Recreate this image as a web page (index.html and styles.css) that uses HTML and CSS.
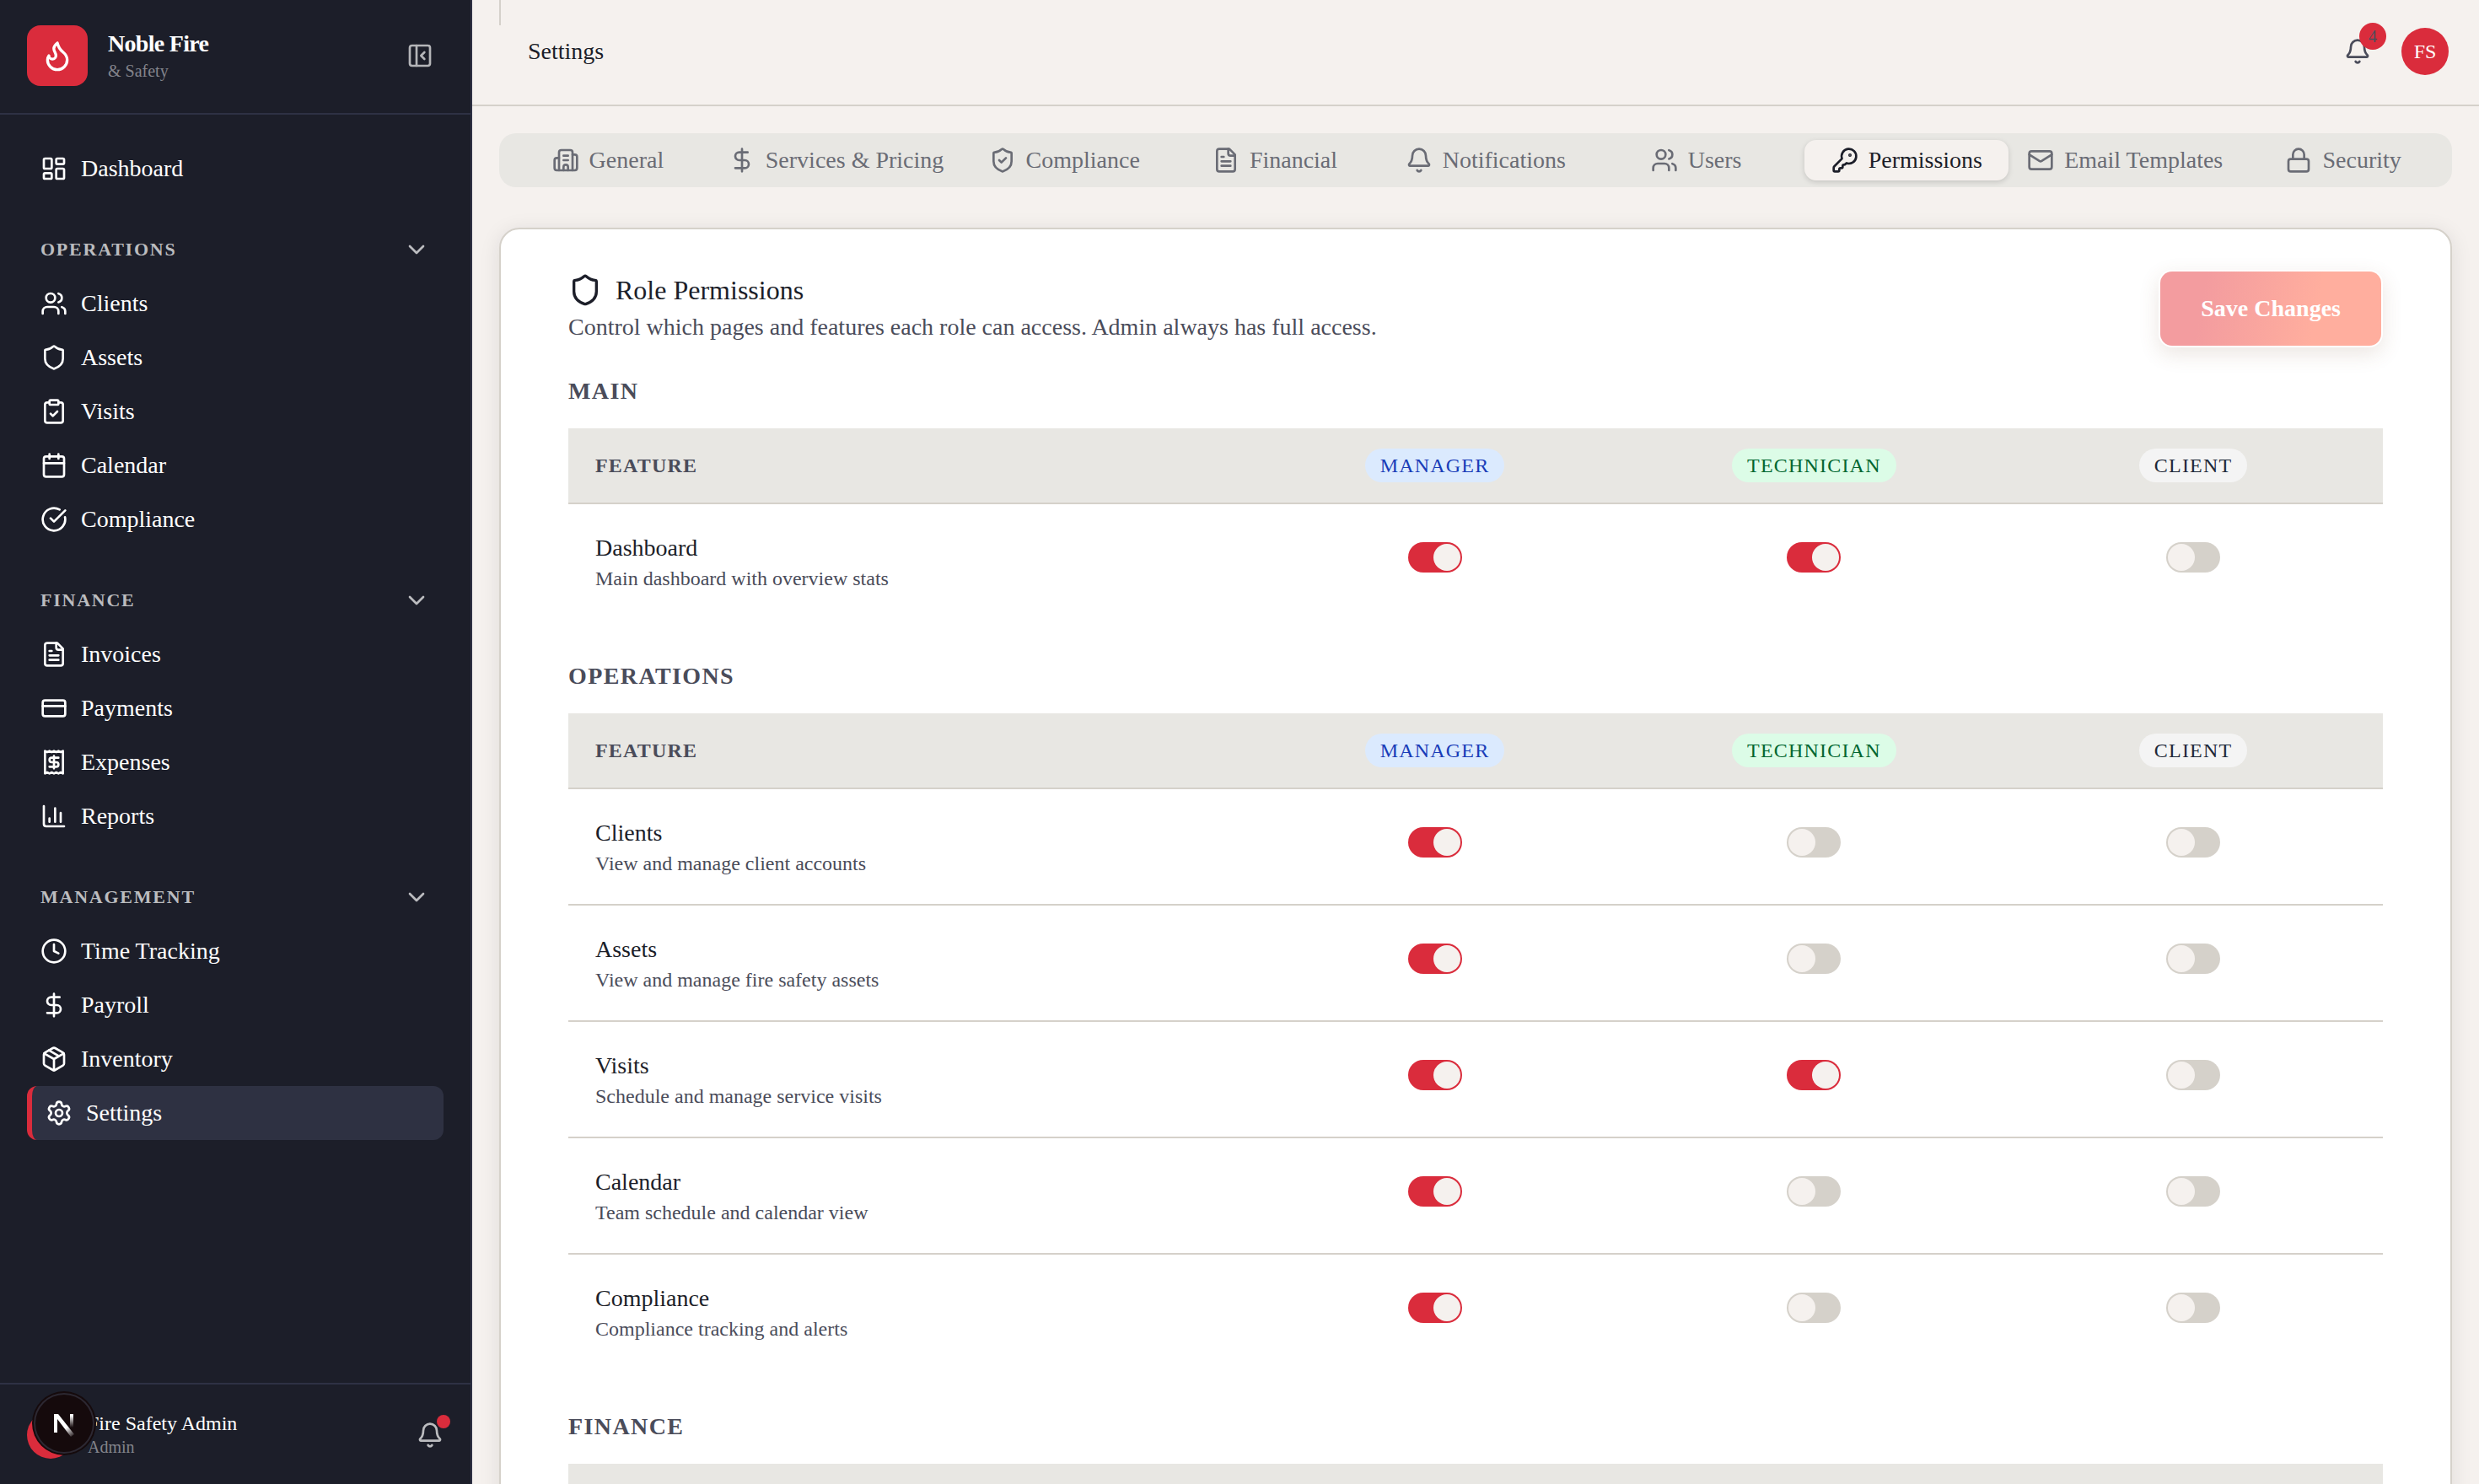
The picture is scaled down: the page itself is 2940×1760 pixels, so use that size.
FILE: index.html
```html
<!DOCTYPE html>
<html lang="en">
<head>
  <meta charset="UTF-8">
  <meta name="viewport" content="width=device-width, initial-scale=1.0">
  <title>Settings - Noble Fire &amp; Safety</title>
  <link rel="stylesheet" href="styles.css">
</head>
<body>
  <!-- icon set -->
  <svg class="sprite" aria-hidden="true">
    <symbol id="i-flame" viewBox="0 0 24 24"><path d="M12 3q1 4 4 6.5t3 5.5a1 1 0 0 1-14 0 5 5 0 0 1 1-3 1 1 0 0 0 5 0c0-2-1.5-3-1.5-5q0-2 2.5-4"/></symbol>
    <symbol id="i-panel" viewBox="0 0 24 24"><rect x="3" y="3" width="18" height="18" rx="2"/><path d="M9 3v18M16 15l-3-3 3-3"/></symbol>
    <symbol id="i-chevron" viewBox="0 0 24 24"><path d="m6 9 6 6 6-6"/></symbol>
    <symbol id="i-dashboard" viewBox="0 0 24 24"><rect x="3" y="3" width="7" height="9" rx="1"/><rect x="14" y="3" width="7" height="5" rx="1"/><rect x="14" y="12" width="7" height="9" rx="1"/><rect x="3" y="16" width="7" height="5" rx="1"/></symbol>
    <symbol id="i-users" viewBox="0 0 24 24"><path d="M16 21v-2a4 4 0 0 0-4-4H6a4 4 0 0 0-4 4v2"/><circle cx="9" cy="7" r="4"/><path d="M22 21v-2a4 4 0 0 0-3-3.87M16 3.13a4 4 0 0 1 0 7.75"/></symbol>
    <symbol id="i-shield" viewBox="0 0 24 24"><path d="M20 13c0 5-3.5 7.5-7.66 8.95a1 1 0 0 1-.67-.01C7.5 20.5 4 18 4 13V6a1 1 0 0 1 1-1c2 0 4.5-1.2 6.24-2.72a1.17 1.17 0 0 1 1.52 0C14.51 3.81 17 5 19 5a1 1 0 0 1 1 1z"/></symbol>
    <symbol id="i-shield-check" viewBox="0 0 24 24"><path d="M20 13c0 5-3.5 7.5-7.66 8.95a1 1 0 0 1-.67-.01C7.5 20.5 4 18 4 13V6a1 1 0 0 1 1-1c2 0 4.5-1.2 6.24-2.72a1.17 1.17 0 0 1 1.52 0C14.51 3.81 17 5 19 5a1 1 0 0 1 1 1z"/><path d="m9 12 2 2 4-4"/></symbol>
    <symbol id="i-clipboard" viewBox="0 0 24 24"><rect x="8" y="2" width="8" height="4" rx="1"/><path d="M16 4h2a2 2 0 0 1 2 2v14a2 2 0 0 1-2 2H6a2 2 0 0 1-2-2V6a2 2 0 0 1 2-2h2M9 14l2 2 4-4"/></symbol>
    <symbol id="i-calendar" viewBox="0 0 24 24"><path d="M8 2v4M16 2v4M3 10h18"/><rect x="3" y="4" width="18" height="18" rx="2"/></symbol>
    <symbol id="i-check" viewBox="0 0 24 24"><path d="M21.801 10A10 10 0 1 1 17 3.335M9 11l3 3L22 4"/></symbol>
    <symbol id="i-file" viewBox="0 0 24 24"><path d="M15 2H6a2 2 0 0 0-2 2v16a2 2 0 0 0 2 2h12a2 2 0 0 0 2-2V7Z"/><path d="M14 2v4a2 2 0 0 0 2 2h4M10 9H8M16 13H8M16 17H8"/></symbol>
    <symbol id="i-card" viewBox="0 0 24 24"><rect x="2" y="5" width="20" height="14" rx="2"/><path d="M2 10h20"/></symbol>
    <symbol id="i-receipt" viewBox="0 0 24 24"><path d="M4 2v20l2-1 2 1 2-1 2 1 2-1 2 1 2-1 2 1V2l-2 1-2-1-2 1-2-1-2 1-2-1-2 1Z"/><path d="M16 8h-6a2 2 0 1 0 0 4h4a2 2 0 1 1 0 4H8M12 17.5v-11"/></symbol>
    <symbol id="i-chart" viewBox="0 0 24 24"><path d="M3 3v16a2 2 0 0 0 2 2h16M18 17V9M13 17V5M8 17v-3"/></symbol>
    <symbol id="i-clock" viewBox="0 0 24 24"><circle cx="12" cy="12" r="10"/><path d="M12 6v6l4 2"/></symbol>
    <symbol id="i-dollar" viewBox="0 0 24 24"><path d="M12 2v20M17 5H9.5a3.5 3.5 0 0 0 0 7h5a3.5 3.5 0 0 1 0 7H6"/></symbol>
    <symbol id="i-package" viewBox="0 0 24 24"><path d="M11 21.73a2 2 0 0 0 2 0l7-4A2 2 0 0 0 21 16V8a2 2 0 0 0-1-1.73l-7-4a2 2 0 0 0-2 0l-7 4A2 2 0 0 0 3 8v8a2 2 0 0 0 1 1.73z"/><path d="M12 22V12M3.29 7 12 12l8.71-5M7.5 4.27l9 5.15"/></symbol>
    <symbol id="i-settings" viewBox="0 0 24 24"><path d="M9.671 4.136a2.34 2.34 0 0 1 4.659 0 2.34 2.34 0 0 0 3.319 1.915 2.34 2.34 0 0 1 2.33 4.033 2.34 2.34 0 0 0 0 3.831 2.34 2.34 0 0 1-2.33 4.033 2.34 2.34 0 0 0-3.319 1.915 2.34 2.34 0 0 1-4.659 0 2.34 2.34 0 0 0-3.32-1.915 2.34 2.34 0 0 1-2.33-4.033 2.34 2.34 0 0 0 0-3.831A2.34 2.34 0 0 1 6.35 6.051a2.34 2.34 0 0 0 3.319-1.915"/><circle cx="12" cy="12" r="3"/></symbol>
    <symbol id="i-bell" viewBox="0 0 24 24"><path d="M10.268 21a2 2 0 0 0 3.464 0M3.262 15.326A1 1 0 0 0 4 17h16a1 1 0 0 0 .74-1.673C19.41 13.956 18 12.499 18 8A6 6 0 0 0 6 8c0 4.499-1.411 5.956-2.738 7.326"/></symbol>
    <symbol id="i-building" viewBox="0 0 24 24"><path d="M10 12h4M10 8h4M14 21v-3a2 2 0 0 0-4 0v3"/><path d="M6 10H4a2 2 0 0 0-2 2v7a2 2 0 0 0 2 2h16a2 2 0 0 0 2-2V9a2 2 0 0 0-2-2h-2"/><path d="M6 21V5a2 2 0 0 1 2-2h8a2 2 0 0 1 2 2v16"/></symbol>
    <symbol id="i-key" viewBox="0 0 24 24"><path d="M2.586 17.414A2 2 0 0 0 2 18.828V21a1 1 0 0 0 1 1h3a1 1 0 0 0 1-1v-1a1 1 0 0 1 1-1h1a1 1 0 0 0 1-1v-1a1 1 0 0 1 1-1h.172a2 2 0 0 0 1.414-.586l.814-.814a6.5 6.5 0 1 0-4-4z"/><circle cx="16.5" cy="7.5" r=".5" fill="currentColor"/></symbol>
    <symbol id="i-mail" viewBox="0 0 24 24"><path d="m22 7-8.991 5.727a2 2 0 0 1-2.009 0L2 7"/><rect x="2" y="4" width="20" height="16" rx="2"/></symbol>
    <symbol id="i-lock" viewBox="0 0 24 24"><rect x="3" y="11" width="18" height="11" rx="2"/><path d="M7 11V7a5 5 0 0 1 10 0v4"/></symbol>
  </svg>

  <aside class="sidebar">
    <div class="brand">
      <div class="brand-logo"><svg class="icon icon-lg"><use href="#i-flame"/></svg></div>
      <div class="brand-text">
        <strong class="brand-name">Noble Fire</strong>
        <span class="small-text">&amp; Safety</span>
      </div>
      <button class="collapse" aria-label="Collapse sidebar"><svg class="icon"><use href="#i-panel"/></svg></button>
    </div>

    <nav class="nav">
      <div class="nav-group">
        <a class="nav-link" href="#"><svg class="icon"><use href="#i-dashboard"/></svg>Dashboard</a>
      </div>
      <div class="nav-group">
        <button class="nav-heading">Operations<svg class="icon"><use href="#i-chevron"/></svg></button>
        <a class="nav-link" href="#"><svg class="icon"><use href="#i-users"/></svg>Clients</a>
        <a class="nav-link" href="#"><svg class="icon"><use href="#i-shield"/></svg>Assets</a>
        <a class="nav-link" href="#"><svg class="icon"><use href="#i-clipboard"/></svg>Visits</a>
        <a class="nav-link" href="#"><svg class="icon"><use href="#i-calendar"/></svg>Calendar</a>
        <a class="nav-link" href="#"><svg class="icon"><use href="#i-check"/></svg>Compliance</a>
      </div>
      <div class="nav-group">
        <button class="nav-heading">Finance<svg class="icon"><use href="#i-chevron"/></svg></button>
        <a class="nav-link" href="#"><svg class="icon"><use href="#i-file"/></svg>Invoices</a>
        <a class="nav-link" href="#"><svg class="icon"><use href="#i-card"/></svg>Payments</a>
        <a class="nav-link" href="#"><svg class="icon"><use href="#i-receipt"/></svg>Expenses</a>
        <a class="nav-link" href="#"><svg class="icon"><use href="#i-chart"/></svg>Reports</a>
      </div>
      <div class="nav-group">
        <button class="nav-heading">Management<svg class="icon"><use href="#i-chevron"/></svg></button>
        <a class="nav-link" href="#"><svg class="icon"><use href="#i-clock"/></svg>Time Tracking</a>
        <a class="nav-link" href="#"><svg class="icon"><use href="#i-dollar"/></svg>Payroll</a>
        <a class="nav-link" href="#"><svg class="icon"><use href="#i-package"/></svg>Inventory</a>
        <a class="nav-link active" href="#"><svg class="icon"><use href="#i-settings"/></svg>Settings</a>
      </div>
    </nav>

    <div class="user">
      <div class="avatar"></div>
      <div class="user-text">
        <span class="user-name">Fire Safety Admin</span>
        <span class="small-text">Admin</span>
      </div>
      <button class="bell-button" aria-label="Notifications"><svg class="icon"><use href="#i-bell"/></svg><span class="dot"></span></button>
    </div>
  </aside>

  <main class="main">
    <header class="topbar">
      <div class="separator"></div>
      <h1 class="page-title">Settings</h1>
      <button class="bell-button" aria-label="4 notifications"><svg class="icon"><use href="#i-bell"/></svg><span class="count">4</span></button>
      <button class="avatar">FS</button>
    </header>

    <div class="content">
      <div class="tabs" role="tablist">
        <button class="tab" role="tab"><svg class="icon"><use href="#i-building"/></svg>General</button>
        <button class="tab" role="tab"><svg class="icon"><use href="#i-dollar"/></svg>Services &amp; Pricing</button>
        <button class="tab" role="tab"><svg class="icon"><use href="#i-shield-check"/></svg>Compliance</button>
        <button class="tab" role="tab"><svg class="icon"><use href="#i-file"/></svg>Financial</button>
        <button class="tab" role="tab"><svg class="icon"><use href="#i-bell"/></svg>Notifications</button>
        <button class="tab" role="tab"><svg class="icon"><use href="#i-users"/></svg>Users</button>
        <button class="tab active" role="tab" aria-selected="true"><svg class="icon"><use href="#i-key"/></svg>Permissions</button>
        <button class="tab" role="tab"><svg class="icon"><use href="#i-mail"/></svg>Email Templates</button>
        <button class="tab" role="tab"><svg class="icon"><use href="#i-lock"/></svg>Security</button>
      </div>

      <section class="card">
        <div class="card-header">
          <div>
            <h2 class="card-title"><svg class="icon icon-lg"><use href="#i-shield"/></svg>Role Permissions</h2>
            <p class="card-description">Control which pages and features each role can access. Admin always has full access.</p>
          </div>
          <button class="save" disabled>Save Changes</button>
        </div>

        <section class="group">
          <h3 class="group-title">Main</h3>
          <table class="permissions">
            <thead>
              <tr>
                <th scope="col">Feature</th>
                <th scope="col" class="role"><span class="badge manager">Manager</span></th>
                <th scope="col" class="role"><span class="badge technician">Technician</span></th>
                <th scope="col" class="role"><span class="badge client">Client</span></th>
              </tr>
            </thead>
            <tbody>
              <tr>
                <td><div class="feature">Dashboard</div><div class="feature-text">Main dashboard with overview stats</div></td>
                <td class="role"><input type="checkbox" class="switch" aria-label="Dashboard, manager" checked></td>
                <td class="role"><input type="checkbox" class="switch" aria-label="Dashboard, technician" checked></td>
                <td class="role"><input type="checkbox" class="switch" aria-label="Dashboard, client"></td>
              </tr>
            </tbody>
          </table>
        </section>

        <section class="group">
          <h3 class="group-title">Operations</h3>
          <table class="permissions">
            <thead>
              <tr>
                <th scope="col">Feature</th>
                <th scope="col" class="role"><span class="badge manager">Manager</span></th>
                <th scope="col" class="role"><span class="badge technician">Technician</span></th>
                <th scope="col" class="role"><span class="badge client">Client</span></th>
              </tr>
            </thead>
            <tbody>
              <tr>
                <td><div class="feature">Clients</div><div class="feature-text">View and manage client accounts</div></td>
                <td class="role"><input type="checkbox" class="switch" aria-label="Clients, manager" checked></td>
                <td class="role"><input type="checkbox" class="switch" aria-label="Clients, technician"></td>
                <td class="role"><input type="checkbox" class="switch" aria-label="Clients, client"></td>
              </tr>
              <tr>
                <td><div class="feature">Assets</div><div class="feature-text">View and manage fire safety assets</div></td>
                <td class="role"><input type="checkbox" class="switch" aria-label="Assets, manager" checked></td>
                <td class="role"><input type="checkbox" class="switch" aria-label="Assets, technician"></td>
                <td class="role"><input type="checkbox" class="switch" aria-label="Assets, client"></td>
              </tr>
              <tr>
                <td><div class="feature">Visits</div><div class="feature-text">Schedule and manage service visits</div></td>
                <td class="role"><input type="checkbox" class="switch" aria-label="Visits, manager" checked></td>
                <td class="role"><input type="checkbox" class="switch" aria-label="Visits, technician" checked></td>
                <td class="role"><input type="checkbox" class="switch" aria-label="Visits, client"></td>
              </tr>
              <tr>
                <td><div class="feature">Calendar</div><div class="feature-text">Team schedule and calendar view</div></td>
                <td class="role"><input type="checkbox" class="switch" aria-label="Calendar, manager" checked></td>
                <td class="role"><input type="checkbox" class="switch" aria-label="Calendar, technician"></td>
                <td class="role"><input type="checkbox" class="switch" aria-label="Calendar, client"></td>
              </tr>
              <tr>
                <td><div class="feature">Compliance</div><div class="feature-text">Compliance tracking and alerts</div></td>
                <td class="role"><input type="checkbox" class="switch" aria-label="Compliance, manager" checked></td>
                <td class="role"><input type="checkbox" class="switch" aria-label="Compliance, technician"></td>
                <td class="role"><input type="checkbox" class="switch" aria-label="Compliance, client"></td>
              </tr>
            </tbody>
          </table>
        </section>

        <section class="group">
          <h3 class="group-title">Finance</h3>
          <table class="permissions">
            <thead>
              <tr>
                <th scope="col">Feature</th>
                <th scope="col" class="role"><span class="badge manager">Manager</span></th>
                <th scope="col" class="role"><span class="badge technician">Technician</span></th>
                <th scope="col" class="role"><span class="badge client">Client</span></th>
              </tr>
            </thead>
          </table>
        </section>
      </section>
    </div>
  </main>

  <!-- floating dev tools button -->
  <button class="dev-badge" aria-label="Open dev tools">
    <svg viewBox="0 0 72 72" width="72" height="72">
      <defs>
        <linearGradient id="fade-a" x1="36" y1="36" x2="47" y2="51" gradientUnits="userSpaceOnUse"><stop offset="0.3" stop-color="#fff"/><stop offset="1" stop-color="#fff" stop-opacity="0.1"/></linearGradient>
        <linearGradient id="fade-b" x1="45" y1="25" x2="45" y2="41" gradientUnits="userSpaceOnUse"><stop offset="0.1" stop-color="#fff"/><stop offset="1" stop-color="#fff" stop-opacity="0"/></linearGradient>
      </defs>
      <path d="M24 25h5l19 24-4 3-16-21v16h-4z" fill="url(#fade-a)"/>
      <path d="M43 25h4v16h-4z" fill="url(#fade-b)"/>
    </svg>
  </button>
</body>
</html>
```
FILE: styles.css
```css
* {
  box-sizing: border-box;
}

body {
  margin: 0;
  height: 100vh;
  display: flex;
  overflow: hidden;
  background-color: #f5f1ee;
  color: #1c1e29;
  font-family: "Liberation Serif", "Times New Roman", serif;
  font-size: 28px;
  line-height: 40px;
}

h1, h2, h3, p {
  margin: 0;
  font-size: 28px;
  font-weight: normal;
}

button {
  padding: 0;
  border: none;
  background: none;
  color: inherit;
  font: inherit;
  cursor: pointer;
}

.sprite {
  display: none;
}

.icon {
  width: 32px;
  height: 32px;
  flex: none;
  display: block;
  fill: none;
  stroke: currentColor;
  stroke-width: 2;
  stroke-linecap: round;
  stroke-linejoin: round;
}

.icon-lg {
  width: 40px;
  height: 40px;
}

/* Sidebar */
.sidebar {
  width: 560px;
  flex: none;
  display: flex;
  flex-direction: column;
  background-color: #1c1e29;
  border-right: 2px solid #2e3144;
  color: #fff;
}

.brand {
  display: flex;
  align-items: center;
  gap: 24px;
  padding: 30px 32px 32px;
  border-bottom: 2px solid #2e3144;
}

.brand-logo {
  width: 72px;
  height: 72px;
  display: flex;
  align-items: center;
  justify-content: center;
  border-radius: 16px;
  background-color: #da2c3c;
}

.brand-text,
.user-text {
  flex: 1;
  display: flex;
  flex-direction: column;
}

.brand-name {
  line-height: 36px;
  letter-spacing: -0.025em;
}

.small-text {
  font-size: 20px;
  line-height: 28px;
  color: #83848b;
}

.collapse {
  padding: 12px;
  color: #b4b5b8;
}

.nav {
  flex: 1;
  display: flex;
  flex-direction: column;
  gap: 32px;
  padding: 32px;
}

.nav-group {
  display: flex;
  flex-direction: column;
}

.nav-link {
  height: 64px;
  display: flex;
  align-items: center;
  gap: 16px;
  padding: 0 16px;
  border-radius: 12px;
  color: #fff;
  text-decoration: none;
}

.nav-link.active {
  background-color: #2e3142;
  border-left: 6px solid #da2c3c;
}

.nav-heading {
  height: 64px;
  display: flex;
  align-items: center;
  justify-content: space-between;
  padding: 0 16px;
  font-size: 22px;
  font-weight: bold;
  letter-spacing: 0.08em;
  text-transform: uppercase;
  color: #bbbcbf;
}

.user {
  display: flex;
  align-items: center;
  gap: 16px;
  padding: 32px 32px 30px;
  border-top: 2px solid #2e3144;
}

.user-name {
  font-size: 24px;
  line-height: 28px;
}

.avatar {
  width: 56px;
  height: 56px;
  flex: none;
  border-radius: 50%;
  background-color: #da2c3c;
  color: #fff;
  font-size: 24px;
}

.bell-button {
  position: relative;
  color: #bbbcbf;
}

.dot {
  position: absolute;
  top: -8px;
  right: -8px;
  width: 16px;
  height: 16px;
  border-radius: 50%;
  background-color: #da2c3c;
}

/* Top bar */
.main {
  flex: 1;
  min-width: 0;
}

.topbar {
  height: 126px;
  display: flex;
  align-items: center;
  padding: 0 36px 2px 32px;
  border-bottom: 2px solid #d5d1ca;
}

.separator {
  width: 2px;
  height: 30px;
  align-self: flex-start;
  background-color: #d5d1ca;
}

.page-title {
  flex: 1;
  padding-left: 32px;
}

.topbar .bell-button {
  margin-right: 36px;
  color: #4a4c5a;
}

.count {
  position: absolute;
  top: -18px;
  right: -18px;
  width: 32px;
  height: 32px;
  border-radius: 50%;
  background-color: #da2c3c;
  color: #4a4c5a;
  font-size: 20px;
  line-height: 32px;
}

/* Tabs */
.content {
  padding: 32px;
}

.tabs {
  display: flex;
  gap: 8px;
  padding: 8px;
  margin-bottom: 48px;
  border-radius: 20px;
  background-color: #e8e7e3;
}

.tab {
  flex: 1 1 0;
  height: 48px;
  display: flex;
  align-items: center;
  justify-content: center;
  gap: 12px;
  padding: 0 14px;
  border-radius: 14px;
  white-space: nowrap;
  color: #6a6c75;
}

.tab.active {
  background-color: #f5f1ee;
  box-shadow: 0 2px 6px rgba(0, 0, 0, 0.15);
  color: #1c1e29;
}

/* Card */
.card {
  padding: 48px 80px;
  border: 2px solid #d5d1ca;
  border-radius: 24px;
  background-color: #fff;
  box-shadow: 0 4px 24px rgba(28, 30, 41, 0.1);
}

.card-header {
  display: flex;
  align-items: center;
  justify-content: space-between;
  margin-bottom: 32px;
}

.card-title {
  display: flex;
  align-items: center;
  gap: 16px;
  font-size: 32px;
}

.card-description {
  padding-top: 4px;
  color: #4a4c5a;
}

.save {
  height: 92px;
  padding: 0 48px;
  border: 2px solid transparent;
  border-radius: 16px;
  background: linear-gradient(100deg, #f39c9f 20%, #ffae9e 70%) padding-box;
  box-shadow: 0 8px 24px rgba(120, 80, 50, 0.14);
  color: #fff;
  font-weight: bold;
}

.group {
  margin-bottom: 48px;
}

.group-title {
  margin-bottom: 24px;
  font-weight: bold;
  letter-spacing: 0.05em;
  text-transform: uppercase;
  color: #4a4c5a;
}

.permissions {
  width: 100%;
  table-layout: fixed;
  border-collapse: separate;
  border-spacing: 0;
}

.permissions th {
  height: 90px;
  padding: 0 32px;
  border-bottom: 2px solid #d5d1ca;
  background-color: #e8e7e3;
  color: #4a4c5a;
  font-size: 24px;
  letter-spacing: 0.05em;
  text-align: left;
  text-transform: uppercase;
}

.permissions td {
  padding: 32px;
  border-bottom: 2px solid #d5d1ca;
}

.permissions tr:last-child td {
  border-bottom: none;
}

.permissions .role {
  width: 20.9%;
  padding-top: 0;
  padding-bottom: 0;
  text-align: center;
}

.feature-text {
  font-size: 24px;
  line-height: 32px;
  color: #4a4c5a;
}

.badge {
  display: inline-block;
  padding: 4px 18px;
  border-radius: 20px;
  font-weight: normal;
  line-height: 32px;
}

.manager {
  background-color: #dbeafe;
  color: #193cb8;
}

.technician {
  background-color: #dcfce7;
  color: #016630;
}

.client {
  background-color: #f4f4f4;
  color: #1e2939;
}

.switch {
  appearance: none;
  width: 64px;
  height: 36px;
  margin: 0;
  padding: 2px;
  border-radius: 18px;
  background-color: #d5d1ca;
  cursor: pointer;
}

.switch::before {
  content: "";
  display: block;
  width: 32px;
  height: 32px;
  border-radius: 50%;
  background-color: #f5f1ee;
}

.switch:checked {
  background-color: #da2c3c;
}

.switch:checked::before {
  margin-left: auto;
}

.dev-badge {
  position: fixed;
  left: 40px;
  bottom: 36px;
  width: 72px;
  height: 72px;
  border-radius: 50%;
  background-color: #150a0c;
  box-shadow: inset 0 0 0 2px #2c2832, 0 0 0 2px #150a0c;
}

.dev-badge svg {
  display: block;
}
```
